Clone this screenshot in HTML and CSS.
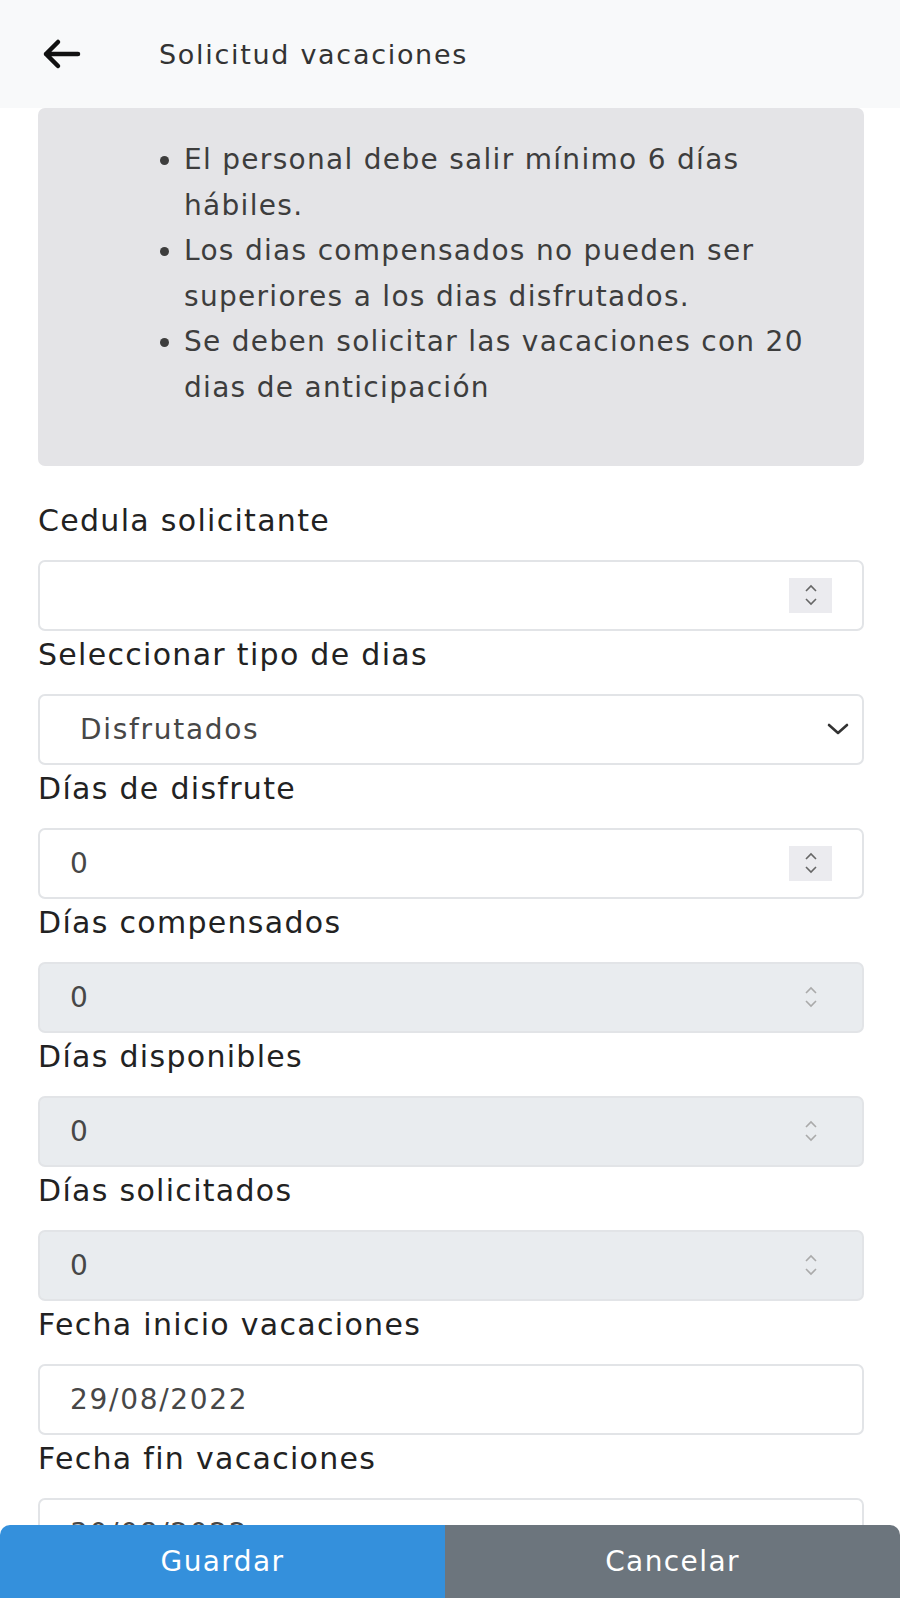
FILE: index.html
```html
<!DOCTYPE html>
<html lang="es">
<head>
    <meta charset="UTF-8">
    <meta name="viewport" content="width=device-width, initial-scale=1.0">
    <title>Solicitud vacaciones</title>
    <link rel="stylesheet" href="styles.css">
</head>
<body>
    <header class="topbar">
        <svg class="back" width="40" height="32" viewBox="0 0 40 32" aria-hidden="true">
            <path d="M37 16H5M17 4L5 16l12 12" fill="none" stroke="#111" stroke-width="4.5" stroke-linecap="round" stroke-linejoin="round"/>
        </svg>
        <span class="title">Solicitud vacaciones</span>
    </header>

    <main class="content">
        <div class="notice">
            <ul>
                <li>El personal debe salir mínimo 6 días hábiles.</li>
                <li>Los dias compensados no pueden ser superiores a los dias disfrutados.</li>
                <li>Se deben solicitar las vacaciones con 20 dias de anticipación</li>
            </ul>
        </div>

        <form class="form">
            <div class="group">
                <label>Cedula solicitante</label>
                <div class="field">
                    <span class="value"></span>
                    <span class="spin">
                        <svg width="16" height="24" viewBox="0 0 16 24"><path d="M3 8l5-5 5 5M3 16l5 5 5-5" fill="none" stroke="#666" stroke-width="1.6"/></svg>
                    </span>
                </div>
            </div>
            <div class="group">
                <label>Seleccionar tipo de dias</label>
                <div class="field select">
                    <span class="value">Disfrutados</span>
                    <svg width="22" height="12" viewBox="0 0 22 12"><path d="M2 2l9 8 9-8" fill="none" stroke="#333" stroke-width="2.6" stroke-linecap="round" stroke-linejoin="round"/></svg>
                </div>
            </div>
            <div class="group">
                <label>Días de disfrute</label>
                <div class="field">
                    <span class="value">0</span>
                    <span class="spin">
                        <svg width="16" height="24" viewBox="0 0 16 24"><path d="M3 8l5-5 5 5M3 16l5 5 5-5" fill="none" stroke="#666" stroke-width="1.6"/></svg>
                    </span>
                </div>
            </div>
            <div class="group">
                <label>Días compensados</label>
                <div class="field disabled">
                    <span class="value">0</span>
                    <span class="spin">
                        <svg width="16" height="24" viewBox="0 0 16 24"><path d="M3 8l5-5 5 5M3 16l5 5 5-5" fill="none" stroke="#aaa" stroke-width="1.6"/></svg>
                    </span>
                </div>
            </div>
            <div class="group">
                <label>Días disponibles</label>
                <div class="field disabled">
                    <span class="value">0</span>
                    <span class="spin">
                        <svg width="16" height="24" viewBox="0 0 16 24"><path d="M3 8l5-5 5 5M3 16l5 5 5-5" fill="none" stroke="#aaa" stroke-width="1.6"/></svg>
                    </span>
                </div>
            </div>
            <div class="group">
                <label>Días solicitados</label>
                <div class="field disabled">
                    <span class="value">0</span>
                    <span class="spin">
                        <svg width="16" height="24" viewBox="0 0 16 24"><path d="M3 8l5-5 5 5M3 16l5 5 5-5" fill="none" stroke="#aaa" stroke-width="1.6"/></svg>
                    </span>
                </div>
            </div>
            <div class="group">
                <label>Fecha inicio vacaciones</label>
                <div class="field">
                    <span class="value">29/08/2022</span>
                </div>
            </div>
            <div class="group">
                <label>Fecha fin vacaciones</label>
                <div class="field">
                    <span class="value">30/08/2022</span>
                </div>
            </div>
        </form>
    </main>

    <footer class="actions">
        <button type="button" class="btn save">Guardar</button>
        <button type="button" class="btn cancel">Cancelar</button>
    </footer>
</body>
</html>
```

FILE: styles.css
```css
body {
    font-family: "DejaVu Sans", "Noto Sans", sans-serif;
    margin: 0;
    background-color: #fff;
    color: #212529;
}
.topbar {
    display: flex;
    align-items: center;
    height: 108px;
    background-color: #f8f9fa;
    padding-left: 41px;
}
.back {
    display: block;
}
.title {
    margin-left: 78px;
    font-size: 27px;
    letter-spacing: 1.7px;
    color: #333;
}
.content {
    padding: 0 36px 200px 38px;
}
.notice {
    background-color: #e4e4e7;
    border-radius: 7px;
    padding: 29px 20px 55px 146px;
}
.notice ul {
    margin: 0;
    padding: 0;
    font-size: 28px;
    letter-spacing: 1.3px;
    line-height: 45.6px;
    color: #3d3d3d;
}
.form {
    margin-top: 34px;
}
.group label {
    display: block;
    font-size: 30px;
    letter-spacing: 1.3px;
    line-height: 42px;
    color: #222;
}
.field {
    display: flex;
    align-items: center;
    justify-content: space-between;
    height: 71px;
    box-sizing: border-box;
    margin: 18px 0 3px;
    padding: 0 30px;
    border: 2px solid #e2e4e7;
    border-radius: 7px;
    font-size: 28px;
    letter-spacing: 1.7px;
    color: #474747;
}
.field.select {
    padding: 0 13px 0 40px;
}
.field.disabled {
    background-color: #e9ecef;
}
.spin {
    display: flex;
    align-items: center;
    justify-content: center;
    width: 43px;
    height: 35px;
    background-color: #ebebef;
}
.disabled .spin {
    background-color: transparent;
}
.actions {
    position: fixed;
    left: 0;
    right: 0;
    bottom: 0;
    display: flex;
    height: 73px;
    border-radius: 10px 10px 0 0;
    overflow: hidden;
}
.btn {
    border: none;
    color: #fff;
    font-family: "DejaVu Sans", "Noto Sans", sans-serif;
    font-size: 28px;
    letter-spacing: 1.4px;
    cursor: pointer;
}
.save {
    width: 445px;
    background-color: #3490dc;
}
.cancel {
    flex: 1;
    background-color: #6c757d;
}
```
